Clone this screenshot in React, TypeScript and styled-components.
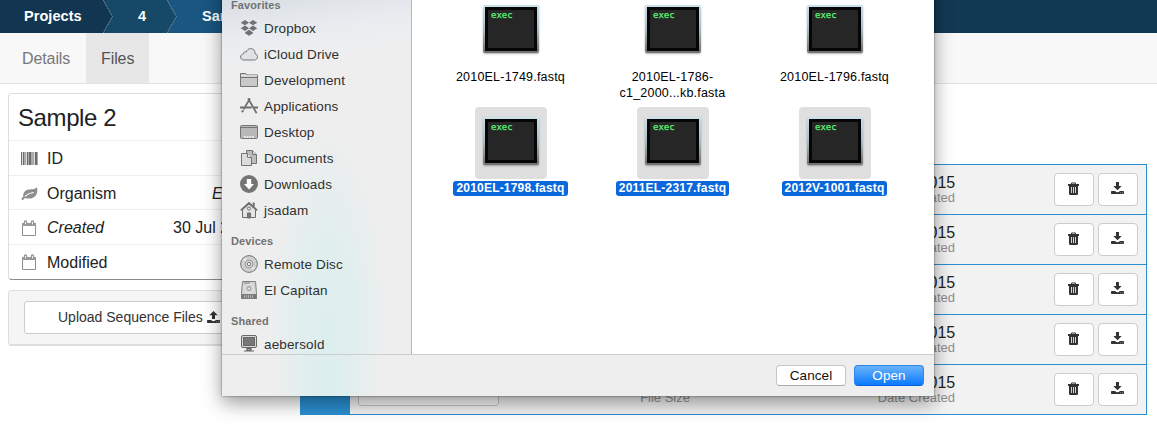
import React from "react";
import styled, { createGlobalStyle } from "styled-components";

const Global = createGlobalStyle`
  * { box-sizing: border-box; }
  html, body { margin: 0; background: #fff; overflow: hidden; }
  body { font-family: "Liberation Sans", Arial, sans-serif; color: #222; }
`;

const Page = styled.div`
  position: relative;
  width: 1157px;
  height: 426px;
  overflow: hidden;
`;

/* ---------- Site header ---------- */
const Header = styled.nav`
  display: flex;
  height: 33px;
  background: linear-gradient(90deg, #1a5a86 0, #1a5a86 30%, #123952 60%);
`;
const Crumb = styled.span<{ $w: number; $pad: number; $bg: string }>`
  width: ${p => p.$w}px;
  padding-left: ${p => p.$pad}px;
  background: ${p => p.$bg};
  color: #fff;
  font-size: 14.5px;
  font-weight: 700;
  letter-spacing: 0.05px;
  line-height: 33px;
`;
const TabBar = styled.div`
  display: flex;
  height: 51px;
  background: #f8f8f8;
  border-bottom: 1px solid #e3e3e3;
`;
const Tab = styled.span<{ $active?: boolean; $w: number; $pad: number }>`
  width: ${p => p.$w}px;
  padding-left: ${p => p.$pad}px;
  line-height: 52px;
  height: 50px;
  font-size: 16px;
  letter-spacing: -0.1px;
  color: ${p => (p.$active ? "#555" : "#777")};
  background: ${p => (p.$active ? "#e7e7e7" : "transparent")};
`;

/* ---------- Sample details ---------- */
const Body = styled.div`
  display: flex;
  padding: 9px 10px 0 8px;
`;
const Side = styled.aside`
  width: 283px;
  margin-right: 9px;
`;
const Card = styled.section`
  height: 187px;
  border: 1px solid #ddd;
  border-bottom-color: #8c8c8c;
  border-radius: 4px;
`;
const CardTitle = styled.h1`
  margin: 0;
  padding-left: 9px;
  height: 46px;
  line-height: 48px;
  font-size: 24px;
  font-weight: 400;
  letter-spacing: -0.4px;
`;
const DetailRow = styled.div`
  display: flex;
  align-items: center;
  height: 34.7px;
  padding: 2px 9px 0 12px;
  border-top: 1px solid #eee;
  font-size: 16px;
  letter-spacing: 0;
  svg { width: 17px; height: 17px; margin-right: 9px; flex: none; }
`;
const DetailName = styled.span<{ $italic?: boolean }>`
  font-style: ${p => (p.$italic ? "italic" : "normal")};
`;
const DetailValue = styled.span<{ $italic?: boolean; $w: number }>`
  width: ${p => p.$w}px;
  margin-left: auto;
  white-space: nowrap;
  font-style: ${p => (p.$italic ? "italic" : "normal")};
`;
const UploadPanel = styled.div`
  margin-top: 10px;
  height: 56px;
  padding: 10px 15px;
  background: #f5f5f5;
  border: 1px solid #ddd;
  border-bottom: 2px solid #ddd;
  border-radius: 4px;
`;
const UploadButton = styled.button`
  display: flex;
  align-items: center;
  width: 100%;
  height: 33px;
  padding: 0 0 1px 33px;
  font: 14px "Liberation Sans", Arial, sans-serif;
  letter-spacing: 0;
  color: #333;
  background: #fff;
  border: 1px solid #ccc;
  border-radius: 3px;
  svg { margin-left: 4px; }
`;

/* ---------- File list ---------- */
const FileTable = styled.section`
  flex: none;
  width: 847px;
  height: 251px;
  margin-top: 71px;
  border: 1px solid #2a8fd0;
  border-bottom: 0;
`;
const FileRow = styled.div`
  display: grid;
  grid-template-columns: 49px 8px 141px 191px 265px 1fr;
  height: 50px;
  background: #f2f2f2;
  border-bottom: 1px solid #2a8fd0;
`;
const RowMark = styled.div`
  background: #2a8fd0;
`;
const NameBox = styled.div`
  grid-column: 3;
  height: 33px;
  margin-top: 8px;
  background: #f7f7f7;
  border: 1px solid #c4c4c4;
  border-radius: 3px;
`;
const Meta = styled.div`
  display: flex;
  flex-direction: column;
  justify-content: flex-end;
  align-items: flex-end;
  padding-bottom: 10px;
`;
const MetaValue = styled.span`
  font-size: 16px;
  line-height: 18px;
  letter-spacing: -0.1px;
`;
const MetaName = styled.span`
  font-size: 13px;
  line-height: 12px;
  color: #8f8f8f;
`;
const Actions = styled.div`
  display: flex;
  justify-content: flex-end;
  gap: 4px;
  padding: 8px 8px 0 0;
`;
const ActionButton = styled.button`
  display: flex;
  align-items: center;
  justify-content: center;
  width: 40px;
  height: 33px;
  padding: 0 1px 2px 0;
  background: #fff;
  border: 1px solid #ccc;
  border-radius: 4px;
`;

/* ---------- Open-file dialog ---------- */
const Dialog = styled.div`
  position: absolute;
  left: 222px;
  top: -40px;
  width: 712px;
  height: 436px;
  padding-top: 40px;
  display: flex;
  flex-direction: column;
  background:
    linear-gradient(90deg, transparent 52px, rgba(215, 238, 238, 0.7) 92px, rgba(215, 238, 238, 0.7) 115px, transparent 160px) 0 395px / 100% 41px no-repeat,
    #eee;
  box-shadow: 0 0 2px rgba(0, 0, 0, 0.5), 0 7px 18px rgba(0, 0, 0, 0.4);
`;
const Panes = styled.div`
  display: flex;
  height: 354px;
  overflow: hidden;
`;
const Sidebar = styled.div`
  width: 190px;
  border-right: 1px solid #b7b7b7;
  background:
    radial-gradient(ellipse 60px 220px at 106px 350px, rgba(215, 238, 238, 0.75) 0, rgba(215, 238, 238, 0.6) 45%, transparent 100%),
    linear-gradient(172deg, #d8dde4 0, #e2e6eb 22px, #eaedf0 45px, transparent 75px),
    #eee;
`;
const Heading = styled.div<{ $first?: boolean }>`
  display: flex;
  align-items: flex-end;
  height: ${p => (p.$first ? 15 : 28)}px;
  padding: 0 0 3px 9px;
  font-size: 11px;
  font-weight: 700;
  line-height: 14px;
  letter-spacing: 0.1px;
  color: #727272;
`;
const Place = styled.div`
  display: flex;
  align-items: center;
  height: 26px;
  padding-left: 18px;
  font-size: 13.5px;
  letter-spacing: 0.14px;
  color: #303030;
  svg { width: 18px; height: 18px; margin-right: 6px; flex: none; }
`;
const FilePane = styled.div`
  display: grid;
  grid-template-columns: repeat(3, 162px);
  grid-auto-rows: 112px;
  flex: 1;
  margin-top: -5px;
  padding-left: 18px;
  background: #fff;
`;
const FileItem = styled.div`
  display: flex;
  flex-direction: column;
  align-items: center;
`;
const Thumb = styled.div<{ $selected?: boolean }>`
  width: 72px;
  height: 72px;
  padding: 10px 8px;
  border-radius: 4px;
  background: ${p => (p.$selected ? "#dfdfdf" : "transparent")};
`;
const Frame = styled.div`
  height: 48px;
  padding: 2px;
  border-radius: 2px;
  background: linear-gradient(#cbe2ec, #a9bcc4 50%, #707070);
  box-shadow: 0 1px 2px rgba(0, 0, 0, 0.3);
`;
const Screen = styled.div`
  height: 44px;
  border: 3px solid #060606;
  background: #262626;
  padding: 0 0 0 3px;
  font: 9px/11px "DejaVu Sans Mono", monospace;
  color: #5cf577;
  -webkit-text-stroke: 0.25px #5cf577;
`;
const FileName = styled.div<{ $selected?: boolean }>`
  margin-top: 2px;
  margin-left: -1px;
  padding: 0 3px;
  border-radius: 3px;
  font-size: ${p => (p.$selected ? 12 : 12.5)}px;
  text-align: center;
  white-space: pre;
  line-height: ${p => (p.$selected ? 15 : 16)}px;
  letter-spacing: ${p => (p.$selected ? 0.2 : 0.2)}px;
  font-weight: ${p => (p.$selected ? 700 : 400)};
  color: ${p => (p.$selected ? "#fff" : "#000")};
  background: ${p => (p.$selected ? "#0a68dc" : "transparent")};
`;
const Footer = styled.div`
  display: flex;
  justify-content: flex-end;
  gap: 8px;
  height: 42px;
  padding: 10px 10px 0 0;
  border-top: 1px solid #cdcdcd;
`;
const DialogButton = styled.button<{ $primary?: boolean }>`
  width: 70px;
  height: 21px;
  padding: 0;
  border-radius: 4px;
  font: 13.5px/18px "Liberation Sans", Arial, sans-serif;
  letter-spacing: 0.1px;
  color: ${p => (p.$primary ? "#fff" : "#111")};
  border: 1px solid ${p => (p.$primary ? "#2d85ee" : "#c6c6c6")};
  border-bottom-color: ${p => (p.$primary ? "#0a63e0" : "#aaa")};
  background: ${p => (p.$primary ? "linear-gradient(#6bb3fa, #0a7aff)" : "#fff")};
`;

/* ---------- Icons ---------- */
const CrumbArrow = ({ left, right }: { left: string; right: string }) => (
  <svg width="10" height="33">
    <rect width="10" height="33" fill={right} />
    <path d="M0 0L9.5 16.5L0 33z" fill={left} />
    <path d="M0 0L9.5 16.5L0 33" fill="none" stroke="#7c97aa" strokeWidth="0.9" strokeDasharray="1.6 0.7" />
  </svg>
);

const Barcode = () => (
  <svg viewBox="0 0 17 17" shapeRendering="crispEdges">
    <path d="M0 2h17v13H0z" fill="#aaa" />
    <path d="M0 2h1v13H0zM2 2h1v13H2zM6 2h1v13H6zM8 2h2v13H8zM14 2h2v13h-2z" fill="#6c6c6c" />
    <path d="M1 2h1v13H1zM5 2h1v13H5zM13 2h1v13h-1z" fill="#ddd" />
  </svg>
);
const Leaf = () => (
  <svg viewBox="0 0 17 17" fill="#8e8e8e">
    <path d="M15.8 2.2C17.2 6 16 11 12 12.8c-3 1.3-6 .8-8 .1-.9.4-1.6 2-2.4 2-.8 0-1.4-.8-1-1.4C1 12.7 2 12 2.3 11.5 1.8 8.500 3.500 5.700 6.500 4.800 9.500 3.900 14 4.800 15.800 2.200z" />
    <path d="M4.300 11.100C6 9.500 8.500 7.800 12.300 7.500" fill="none" stroke="#fff" strokeWidth="1.200" strokeLinecap="round" />
  </svg>
);
const Calendar = () => (
  <svg viewBox="0 0 17 17" fill="none" stroke="#8e8e8e">
    <path d="M1.500 3.500h13v12h-13z" strokeWidth="1" />
    <path d="M1 3h14v3H1z" fill="#9a9a9a" stroke="none" />
    <path d="M4.500 2v2M11.500 2v2" strokeWidth="3.400" strokeLinecap="round" />
    <path d="M4.500 2v2M11.500 2v2" stroke="#eee" strokeWidth="1.200" strokeLinecap="round" />
  </svg>
);
const Trash = () => (
  <svg width="11" height="13" viewBox="0 0 11 13">
    <path d="M3.500 2V1h4v1" fill="none" stroke="#333" />
    <path d="M0 2h11v2H0zM1 4h9v7.500q0 1.500-1.200 1.500H2.200Q1 13 1 11.500z" fill="#333" />
    <path d="M3.500 5v6M5.500 5v6M7.500 5v6" stroke="#fff" strokeWidth=".8" />
  </svg>
);
const Tray = ({ up }: { up?: boolean }) => (
  <svg width="13" height="13" viewBox="0 0 13 13" fill="#333">
    <path d={up ? "M6.500 0l4.200 4.300H8V8H5V4.300H2.300z" : "M5 0h3v4h2.700L6.500 8.200 2.300 4H5z"} />
    <path d="M.7 9h3.500q.8 1.300 2.300 1.300T8.800 9h3.500q.7 0 .7.700v1.600q0 .7-.7.7H.7q-.7 0-.7-.7V9.700Q0 9 .7 9z" />
    <path d="M9 10.800h1M11 10.800h1" stroke="#ccc" strokeWidth=".6" />
  </svg>
);

const Dropbox = () => (
  <svg viewBox="0 0 18 18" fill="#6d7074">
    <path d="M5 1l4 2.700-4 2.600L.7 3.700zM13 1l4.300 2.700L13 6.300 9 3.700zM5 6.500l4 2.700-4 2.700L.7 9.200zM13 6.500l4.300 2.700L13 11.900 9 9.200zM9 10.800l4 2.600v.8l-4 2.600-4-2.600v-.8z" />
  </svg>
);
const Cloud = () => (
  <svg viewBox="0 0 18 18" fill="#e0e2e4" stroke="#777" strokeWidth="1">
    <path d="M4 15C1.800 15 .6 13.700.6 12c0-1.600 1.200-2.800 2.700-2.900C3.200 7.300 5 6.400 6.300 7 7 4.800 8.700 3.600 10.600 3.600c2.600 0 4.400 1.900 4.400 4.300v.8c1.500.4 2.500 1.500 2.500 3 0 1.900-1.400 3.300-3.300 3.300z" />
  </svg>
);
const Folder = () => (
  <svg viewBox="0 0 18 18" fill="#c9c9c9" stroke="#747474">
    <path d="M.5 15.500v-13h5.200l1.500 1.500h10.300v11.500z" />
    <path d="M1 4.800h16" stroke="#eee" /><path d="M.5 6.500h17" />
  </svg>
);
const Apps = () => (
  <svg viewBox="0 0 18 18" fill="none" stroke="#6f6f6f" strokeWidth="1.700">
    <path d="M8 1.500l2 3.200 5.500 9.500M10 1.500L3.500 12.500M15 13.500l1.600 2.700M3.500 13.500l-1.800 1.500" />
    <path d="M0 10.500h4M5.300 10.500h6.500M13.700 10.500H18" strokeWidth="1.800" />
  </svg>
);
const Desktop = () => (
  <svg viewBox="0 0 18 18" fill="#b9b9b9" stroke="#757575">
    <rect x=".5" y="2.500" width="17" height="13" rx="1" />
    <path d="M1 4.500h16" /><path d="M4 14h10" stroke="#eee" strokeWidth="2" strokeDasharray="1.700 1" />
  </svg>
);
const Docs = () => (
  <svg viewBox="0 0 18 18" fill="#dcdcdc" stroke="#737373">
    <path d="M6.500 14.500v-13h6l4 4v9z" fill="#bcbcbc" /><path d="M12.500 1.500v4h4" />
    <path d="M1.500 16.500v-12h6l4 4v8z" /><path d="M7.500 4.500v4h4" fill="#eee" />
  </svg>
);
const Down = () => (
  <svg viewBox="0 0 18 18">
    <circle cx="9" cy="9" r="9" fill="#747474" /><path d="M6.800 4h4.400v5H14l-5 5.500L4 9h2.800z" fill="#fff" />
  </svg>
);
const Home = () => (
  <svg viewBox="0 0 18 18" fill="none" stroke="#6e6e6e">
    <path d="M2.500 8.500v8h13v-8L9 3z" fill="#e4e4e4" /><path d="M.8 9.300L9 1.800l8.200 7.500" strokeWidth="1.700" />
    <path d="M13.700 5.500V1.500" strokeWidth="2" /><path d="M7.500 17v-5h3v5z" fill="#777" /><circle cx="9" cy="7.500" r="1.600" />
  </svg>
);
const Disc = () => (
  <svg viewBox="0 0 18 18" fill="#cfcfcf" stroke="#777">
    <circle cx="9" cy="9" r="8.400" /><path d="M3 5l4 2.500L5.500 3zM15 13l-4-2.500 1.500 4.500z" fill="#eee" stroke="none" />
    <circle cx="9" cy="9" r="4" fill="#ddd" stroke="#999" /><circle cx="9" cy="9" r="1.800" fill="#eee" />
  </svg>
);
const Drive = () => (
  <svg viewBox="0 0 18 18" fill="#d5d5d5" stroke="#808080">
    <path d="M2.500.5h13l1 12v5h-15v-5z" /><path d="M1.500 13.500h15v4h-15z" fill="#777" />
    <path d="M4 15.500h10" stroke="#bbb" strokeWidth="2.500" strokeDasharray="1 1" />
    <circle cx="9" cy="7.500" r="4.200" stroke="#eee" fill="#c8c8c8" /><circle cx="9" cy="7.500" r="1.600" fill="#eee" stroke="#999" /><path d="M4 2h6" />
  </svg>
);
const Monitor = () => (
  <svg viewBox="0 0 18 18" fill="#d9d9d9" stroke="#666">
    <rect x="1.500" y=".5" width="15" height="12" rx="1.500" /><rect x="3.500" y="2.500" width="11" height="8" fill="#777" />
    <path d="M7 13.500h4V15H7zM4 16h10" strokeWidth="1.200" />
  </svg>
);

const favorites: [string, React.FC][] = [
  ["Dropbox", Dropbox], ["iCloud Drive", Cloud], ["Development", Folder], ["Applications", Apps],
  ["Desktop", Desktop], ["Documents", Docs], ["Downloads", Down], ["jsadam", Home],
];
const devices: [string, React.FC][] = [["Remote Disc", Disc], ["El Capitan", Drive]];
const shared: [string, React.FC][] = [["aebersold", Monitor]];

const files = [
  { name: "2010EL-1749.fastq" }, { name: "2010EL-1786-\nc1_2000...kb.fasta" }, { name: "2010EL-1796.fastq" },
  { name: "2010EL-1798.fastq", selected: true }, { name: "2011EL-2317.fastq", selected: true }, { name: "2012V-1001.fastq", selected: true },
];

const rows = [{}, {}, {}, {}, { size: true }] as { size?: boolean }[];

const Places = ({ items }: { items: [string, React.FC][] }) => (
  <>{items.map(([name, Icon]) => <Place key={name}><Icon />{name}</Place>)}</>
);

export default function App() {
  return (
    <Page>
      <Global />
      <Header>
        <Crumb $w={103} $pad={24} $bg="#123652">Projects</Crumb>
        <CrumbArrow left="#123652" right="#164967" />
        <Crumb $w={54} $pad={25} $bg="#164967">4</Crumb>
        <CrumbArrow left="#164967" right="#1a5680" />
        <Crumb $w={123} $pad={25} $bg="#1a5680">Sample 2</Crumb>
      </Header>
      <TabBar>
        <Tab $w={86} $pad={22}>Details</Tab>
        <Tab $w={63} $pad={15} $active>Files</Tab>
      </TabBar>
      <Body>
        <Side>
          <Card>
            <CardTitle>Sample 2</CardTitle>
            <DetailRow><Barcode /><DetailName>ID</DetailName></DetailRow>
            <DetailRow><Leaf /><DetailName>Organism</DetailName><DetailValue $w={69} $italic>E. coli</DetailValue></DetailRow>
            <DetailRow><Calendar /><DetailName $italic>Created</DetailName><DetailValue $w={108}>30 Jul 2015</DetailValue></DetailRow>
            <DetailRow><Calendar /><DetailName>Modified</DetailName></DetailRow>
          </Card>
          <UploadPanel>
            <UploadButton>Upload Sequence Files<Tray up /></UploadButton>
          </UploadPanel>
        </Side>
        <FileTable>
          {rows.map((row, i) => (
            <FileRow key={i}>
              <RowMark />
              <NameBox />
              <Meta>{row.size && <MetaName>File Size</MetaName>}</Meta>
              <Meta><MetaValue>2015</MetaValue><MetaName>Date Created</MetaName></Meta>
              <Actions>
                <ActionButton><Trash /></ActionButton>
                <ActionButton><Tray /></ActionButton>
              </Actions>
            </FileRow>
          ))}
        </FileTable>
      </Body>
      <Dialog>
        <Panes>
          <Sidebar>
            <Heading $first>Favorites</Heading>
            <Places items={favorites} />
            <Heading>Devices</Heading>
            <Places items={devices} />
            <Heading>Shared</Heading>
            <Places items={shared} />
          </Sidebar>
          <FilePane>
            {files.map(f => (
              <FileItem key={f.name}>
                <Thumb $selected={f.selected}><Frame><Screen>exec</Screen></Frame></Thumb>
                <FileName $selected={f.selected}>{f.name}</FileName>
              </FileItem>
            ))}
          </FilePane>
        </Panes>
        <Footer>
          <DialogButton>Cancel</DialogButton>
          <DialogButton $primary>Open</DialogButton>
        </Footer>
      </Dialog>
    </Page>
  );
}
